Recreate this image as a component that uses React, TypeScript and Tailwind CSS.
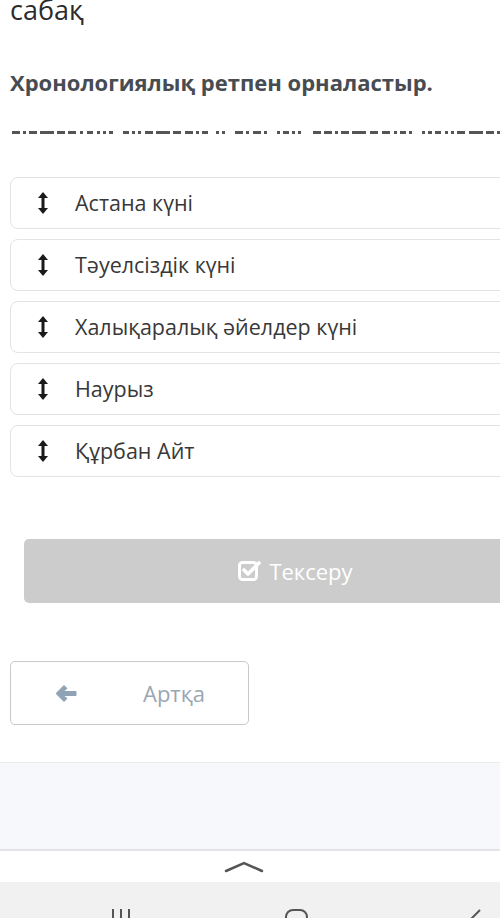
import { useState } from 'react';

// Items to put in chronological order
const items = [
    'Астана күні',
    'Тәуелсіздік күні',
    'Халықаралық әйелдер күні',
    'Наурыз',
    'Құрбан Айт',
];

// widths of the clipped dashes under the heading (text cut off by the scroll)
const dashes = [8, 3, 8, 14, 8, 8, 3, 6, 3, 3, 4, 6, 3, 3, 8, 14, 8, 8, 3, 6, 3, 3, 8, 3, 8, 3, 3, 6, 3, 3, 8, 8, 3, 8, 14, 8, 8, 3, 6, 3, 3, 4, 6, 3, 3, 8, 14, 8, 8, 3, 6];
const gaps = [3, 3, 3, 3, 3, 4, 4, 4, 3, 3, 10, 3, 3, 4, 3, 3, 4, 3, 3, 8, 3, 10, 3, 4, 3, 10, 3, 3, 3, 12, 3, 3, 3, 3, 4, 4, 4, 3, 3, 10, 3, 3, 4, 3, 3, 4, 3, 3, 8, 3, 3];

function DashRow() {
    let x = 12;
    const rects = dashes.map((w, i) => {
        const r = <rect key={i} x={x} y={0} width={w} height={3} fill="#555" />;
        x += w + gaps[i];
        return r;
    });
    return (
        <svg width="500" height="3" className="block">
            {rects}
        </svg>
    );
}

function UpDownIcon() {
    return (
        <svg width="10" height="22" viewBox="0 0 10 22" className="shrink-0">
            <rect x="3.5" y="4" width="3" height="14" fill="#1a1a1a" />
            <polygon points="0,6 5,0 10,6" fill="#1a1a1a" />
            <polygon points="0,16 5,22 10,16" fill="#1a1a1a" />
        </svg>
    );
}

export default function App() {
    const [order] = useState(items);

    return (
        <div className="w-[500px] h-[918px] overflow-hidden bg-white flex flex-col font-['Open_Sans',sans-serif]">
            <div className="-mt-[3px] pl-[10px] text-[27px] leading-[26px] text-[#2b2b2b]">сабақ</div>

            <h1 className="mt-[44px] pl-[10px] text-[22px] leading-[30px] font-bold text-[#474c52] whitespace-nowrap">
                Хронологиялық ретпен орналастыр.
            </h1>

            <div className="mt-[34px]">
                <DashRow />
            </div>

            {/* Sortable list */}
            <div className="mt-[43px] flex flex-col gap-[10px] pl-[10px]">
                {order.map((item) => (
                    <div
                        key={item}
                        className="w-[520px] h-[52px] shrink-0 flex items-center rounded-[8px] border border-[#e3e3e3] bg-white"
                    >
                        <div className="w-[64px] flex justify-center">
                            <UpDownIcon />
                        </div>
                        <span className="text-[21.5px] text-[#383838] whitespace-nowrap">{item}</span>
                    </div>
                ))}
            </div>

            {/* Check button */}
            <div className="mt-[62px] pl-[24px]">
                <button className="w-[543px] h-[64px] rounded-[5px] bg-[#cccccc] flex items-center justify-center gap-[8px] text-white text-[22px]">
                    <svg width="23" height="22" viewBox="0 0 23 22">
                        <rect x="1.5" y="2.5" width="17" height="17" rx="3" fill="none" stroke="white" strokeWidth="3" />
                        <polyline points="6,10 10,14 21,3" fill="none" stroke="white" strokeWidth="3.6" strokeLinecap="round" strokeLinejoin="round" />
                    </svg>
                    Тексеру
                </button>
            </div>

            {/* Back button */}
            <div className="mt-[58px] pl-[10px]">
                <button className="w-[239px] h-[64px] rounded-[5px] border border-[#c9c9c9] bg-white flex items-center">
                    <svg width="21" height="17" viewBox="0 0 21 17" className="ml-[45px]">
                        <polygon points="0,8.5 8,0.5 11,3.5 7,6.5 20,6.5 20,10.5 7,10.5 11,13.5 8,16.5" fill="#8fa3b5" strokeLinejoin="round" stroke="#8fa3b5" strokeWidth="1" />
                    </svg>
                    <span className="ml-[66px] text-[22px] text-[#9aa6b2]">Артқа</span>
                </button>
            </div>

            {/* footer band */}
            <div className="mt-[37px] h-[89px] shrink-0 bg-[#f6f8fb] border-t border-[#ececec] border-b-2 border-b-[#e2e4e6]" />
            <div className="h-[31px] shrink-0 bg-white flex justify-center pt-[10px]">
                <svg width="40" height="12" viewBox="0 0 40 12" className="ml-[-12px]">
                    <polyline points="2,10 20,2 38,10" fill="none" stroke="#555" strokeWidth="2.5" strokeLinecap="round" />
                </svg>
            </div>

            {/* Android nav bar */}
            <div className="flex-1 bg-[#f1f1f1]">
                <div className="flex items-start pt-[27px]">
                    <div className="ml-[112px] flex gap-[6px]">
                        <div className="w-[2px] h-[12px] bg-[#555]" />
                        <div className="w-[2px] h-[12px] bg-[#555]" />
                        <div className="w-[2px] h-[12px] bg-[#555]" />
                    </div>
                    <div className="ml-[155px] w-[23px] h-[20px] rounded-[8px] border-2 border-[#555]" />
                    <svg width="16" height="12" viewBox="0 0 16 12" className="ml-[158px]">
                        <polyline points="14,1 4,11" fill="none" stroke="#555" strokeWidth="2" />
                    </svg>
                </div>
            </div>
        </div>
    );
}
